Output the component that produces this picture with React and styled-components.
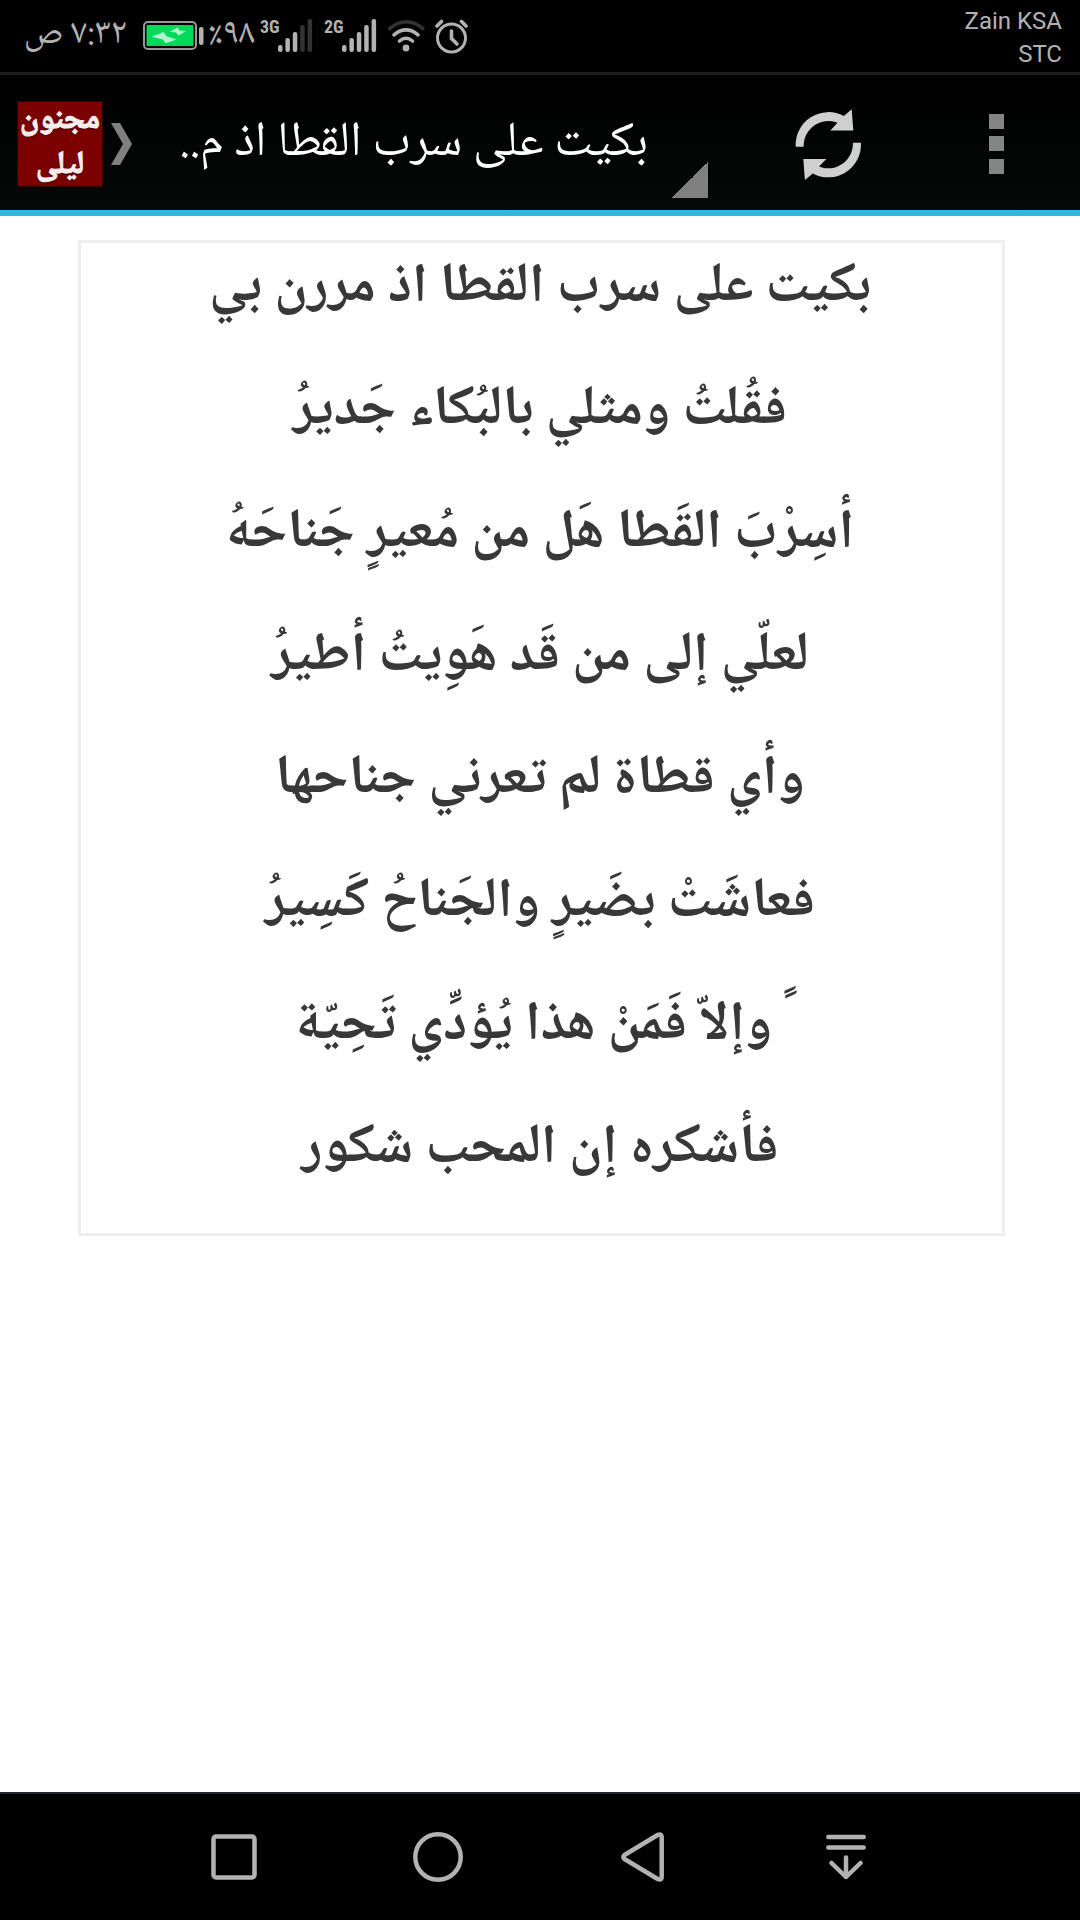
import React, { useState } from "react";
import styled, { createGlobalStyle } from "styled-components";

const arabicFont = `"Noto Naskh Arabic", "DejaVu Sans Condensed", "DejaVu Sans", sans-serif`;

const GlobalStyle = createGlobalStyle`
  * {
    box-sizing: border-box;
  }
  body {
    margin: 0;
    background: #fff;
    font-family: Roboto, "DejaVu Sans", sans-serif;
  }
`;

const Page = styled.div`
  min-height: 100vh;
  display: flex;
  flex-direction: column;
`;

const StatusBar = styled.header`
  height: 75px;
  display: flex;
  align-items: flex-start;
  padding: 0 18px 0 26px;
  background: #000;
  border-bottom: 3px solid #1e1e1e;
  color: #b2b2b2;

  svg {
    display: block;
  }
`;
const StatusText = styled.span`
  width: ${props => props.$width}px;
  margin-right: ${props => props.$gap}px;
  font-family: ${arabicFont};
  font-size: 36px;
  line-height: 72px;
  white-space: nowrap;
`;
const StatusIcon = styled.span`
  margin: 18px ${props => props.$gap || 0}px 0 0;
`;
const Signal = styled.span`
  display: flex;
  margin: 18px 10px 0 0;
`;
const SignalLabel = styled.span`
  width: 18px;
  font-family: "Roboto Condensed", "Liberation Sans Narrow", Roboto, sans-serif;
  font-size: 18px;
  font-weight: 700;
  line-height: 18px;
`;
const Carriers = styled.div`
  margin-left: auto;
  font-size: 24px;
  line-height: 33px;
  padding-top: 5px;
  text-align: right;
`;

const ActionBar = styled.div`
  height: 141px;
  display: flex;
  align-items: center;
  padding-top: 3px;
  background: linear-gradient(#000, #050807);
  border-bottom: 6px solid #33b5e5;
`;
const HomeLink = styled.a`
  display: flex;
  align-items: center;
  gap: 8px;
  padding-left: 17px;
  text-decoration: none;
`;
const Logo = styled.span`
  width: 86px;
  height: 86px;
  display: flex;
  align-items: center;
  background: #7b0000;
  border: 1px solid #2a0808;
  color: #f5eded;
  font-family: ${arabicFont};
  font-size: 32px;
  font-weight: 700;
  line-height: 45px;
  text-align: center;
  text-shadow: 0 1px 2px #200;
  -webkit-text-stroke: 1px #f5eded;
`;
const PoemSelect = styled.select`
  flex: 1;
  height: 108px;
  margin-left: 16px;
  padding: 0 60px 0 0;
  appearance: none;
  border: 0;
  outline: none;
  background: linear-gradient(135deg, transparent 50%, #808080 50%) right
    bottom / 36px 36px no-repeat;
  color: #fff;
  font-family: ${arabicFont};
  font-size: 49px;
`;
const BarButton = styled.button`
  width: 168px;
  height: 132px;
  display: flex;
  align-items: center;
  justify-content: center;
  padding: 0;
  border: 0;
  background: none;
`;
const BarActions = styled.div`
  display: flex;
  margin-left: 36px;
`;

const Content = styled.main`
  flex: 1;
  padding: 24px 75px 24px 78px;
`;
const Poem = styled.article`
  padding: 6px 3px 0 0;
  border: 3px solid #eee;
  color: #383838;
  font-family: ${arabicFont};
  font-size: 55px;
  font-weight: 700;
  text-align: center;
`;
const Verse = styled.p`
  margin: 0 0 43px;
  line-height: 80px;
`;

const NavBar = styled.nav`
  height: 128px;
  display: flex;
  padding: 0 132px;
  background: #000;
  border-top: 2px solid #22252e;
`;
const NavButton = styled.button`
  flex: 1;
  display: flex;
  align-items: center;
  justify-content: center;
  padding: 0;
  border: 0;
  background: none;

  svg {
    fill: none;
    stroke: #b2b2b2;
    stroke-width: 4.5;
    stroke-linecap: round;
    stroke-linejoin: round;
  }
`;

const title = "بكيت على سرب القطا اذ م..";
const verses = [
  "بكيت على سرب القطا اذ مررن بي",
  "فقُلتُ ومثلي بالبُكاء جَديرُ",
  "أسِرْبَ القَطا هَل من مُعيرٍ جَناحَهُ",
  "لعلّي إلى من قَد هَوِيتُ أطيرُ",
  "وأي قطاة لم تعرني جناحها",
  "فعاشَتْ بضَيرٍ والجَناحُ كَسِيرُ",
  "ً وإلاّ فَمَنْ هذا يُؤدِّي تَحِيّة",
  "فأشكره إن المحب شكور"
];

function BatteryIcon() {
  return (
    <svg width="62" height="34" viewBox="0 0 62 34">
      <rect x="2" y="4" width="52" height="27" rx="4" fill="none" stroke="#999" strokeWidth="2" />
      <rect x="4.5" y="7" width="47" height="21" rx="1" fill="#00d95a" />
      <path
        d="M9.7 18.7 21.5 14 24.5 18.3 34.7 21.5 23.7 25.3 20.8 21.5ZM28 13.7 35.5 9.5 37.5 12.5 44 13.2 36.5 17.5 34 14.5Z"
        fill="#b3f4cd"
      />
      <rect x="57" y="9" width="4.5" height="18" rx="2" fill="#b2b2b2" />
    </svg>
  );
}

function SignalBars({ level }) {
  const heights = [7, 14, 20, 27, 33];
  return (
    <svg width="36" height="36" viewBox="0 0 36 36">
      {heights.map((h, i) => (
        <rect
          key={i}
          x={i * 7.4}
          y={34 - h}
          width="4.5"
          height={h}
          rx="2"
          fill={i < level ? "#b2b2b2" : "#333"}
        />
      ))}
    </svg>
  );
}

function WifiIcon() {
  return (
    <svg width="38" height="36" viewBox="2 0 38 36" fill="none" strokeWidth="3.6" strokeLinecap="round">
      <path d="M3.8 10.5Q20-3 36.8 10.5" stroke="#333" />
      <path d="M8 16.8Q20 7 32 16.8M13.5 23Q20 17.5 26.5 23" stroke="#b2b2b2" />
      <circle cx="20" cy="30" r="3.4" fill="#b2b2b2" />
    </svg>
  );
}

function AlarmIcon() {
  return (
    <svg width="34" height="36" viewBox="0 0 34 36" fill="none" stroke="#b2b2b2" strokeWidth="3" strokeLinecap="round">
      <circle cx="16.5" cy="20" r="14" />
      <path d="M16.5 13V20.5L22 26" strokeWidth="3.6" />
      <path d="M2 8 6.5 3.5M31 8 26.5 3.5" strokeWidth="3.6" />
    </svg>
  );
}

function RefreshIcon() {
  const arrow =
    "M56.7 1.3 58.3 22.5 35.3 22.5 42.5 14.8A24.7 24.7 0 0 0 8.7 38.7H.7A32.7 32.7 0 0 1 48.8 8Z";
  return (
    <svg width="68" height="74" viewBox="-1 -1 68 74" fill="#cfcfcf">
      <path d={arrow} />
      <path d={arrow} transform="rotate(180 33.3 36.7)" />
    </svg>
  );
}

function App() {
  const [poem, setPoem] = useState(title);

  return (
    <Page>
      <GlobalStyle />
      <StatusBar>
        <StatusText dir="rtl" $width={101} $gap={15}>
          ٧:٣٢ ص
        </StatusText>
        <StatusIcon $gap={5}>
          <BatteryIcon />
        </StatusIcon>
        <StatusText dir="rtl" $width={46} $gap={5}>
          ٩٨٪
        </StatusText>
        <Signal>
          <SignalLabel>3G</SignalLabel>
          <SignalBars level={3} />
        </Signal>
        <Signal>
          <SignalLabel>2G</SignalLabel>
          <SignalBars level={5} />
        </Signal>
        <StatusIcon $gap={9}>
          <WifiIcon />
        </StatusIcon>
        <StatusIcon>
          <AlarmIcon />
        </StatusIcon>
        <Carriers>
          <div>Zain KSA</div>
          <div>STC</div>
        </Carriers>
      </StatusBar>

      <ActionBar>
        <HomeLink href="#">
          <Logo dir="rtl">مجنون ليلى</Logo>
          <svg width="21" height="42" viewBox="0 0 21 42" fill="#808080">
            <path d="M0 0H9L21 21 9 42H0L12 21Z" />
          </svg>
        </HomeLink>
        <PoemSelect
          dir="rtl"
          aria-label="القصيدة"
          value={poem}
          onChange={e => setPoem(e.target.value)}
        >
          <option>{title}</option>
        </PoemSelect>
        <BarActions>
          <BarButton type="button" aria-label="تحديث">
            <RefreshIcon />
          </BarButton>
          <BarButton type="button" aria-label="المزيد">
            <svg width="15" height="60" viewBox="0 0 15 60" fill="#858585">
              <path d="M0 0h15v15H0ZM0 22h15v15H0ZM0 45h15v15H0Z" />
            </svg>
          </BarButton>
        </BarActions>
      </ActionBar>

      <Content>
        <Poem dir="rtl">
          {verses.map((verse, i) => (
            <Verse key={i}>{verse}</Verse>
          ))}
        </Poem>
      </Content>

      <NavBar>
        <NavButton type="button" aria-label="التطبيقات الأخيرة">
          <svg width="46" height="46" viewBox="0 0 46 46">
            <rect x="2.5" y="2.5" width="41" height="41" rx="2.5" />
          </svg>
        </NavButton>
        <NavButton type="button" aria-label="الرئيسية">
          <svg width="50" height="50" viewBox="0 0 50 50">
            <circle cx="25" cy="25" r="22.7" />
          </svg>
        </NavButton>
        <NavButton type="button" aria-label="رجوع">
          <svg width="43" height="50" viewBox="0 0 43 50">
            <path d="M37 2.8 3.5 23Q1.2 25 3.5 27L37 47.2Q40.5 48.5 40.7 45V5Q40.5 1.5 37 2.8Z" />
          </svg>
        </NavButton>
        <NavButton type="button" aria-label="الإشعارات">
          <svg width="40" height="46" viewBox="0 0 40 46">
            <path d="M2.3 3H37.7M2.3 13.5H37.7M20 23.5V43M5.5 29 20 43 34.5 29" />
          </svg>
        </NavButton>
      </NavBar>
    </Page>
  );
}

export default App;
